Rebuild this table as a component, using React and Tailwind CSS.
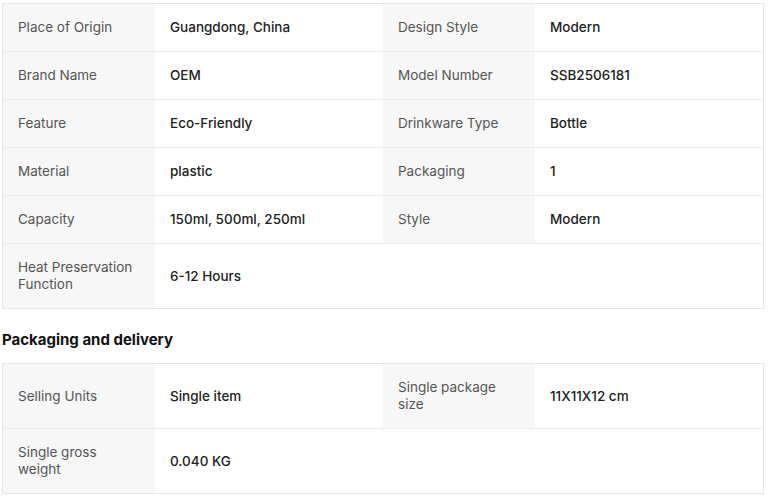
import React from 'react';

const attributes = [
  ['Place of Origin', 'Guangdong, China', 'Design Style', 'Modern'],
  ['Brand Name', 'OEM', 'Model Number', 'SSB2506181'],
  ['Feature', 'Eco-Friendly', 'Drinkware Type', 'Bottle'],
  ['Material', 'plastic', 'Packaging', '1'],
  ['Capacity', '150ml, 500ml, 250ml', 'Style', 'Modern'],
  ['Heat Preservation Function', '6-12 Hours'],
];

const packaging = [
  ['Selling Units', 'Single item', 'Single package size', '11X11X12 cm'],
  ['Single gross weight', '0.040 KG'],
];

function Row({ cells, last }) {
  const [l1, v1, l2, v2] = cells;
  return (
    <div className={`grid grid-cols-[152px_228px_152px_228px] ${last ? '' : 'border-b border-[#ebebeb]'}`}>
      <div className="bg-[#f7f7f7] pl-[15px] pr-[12px] py-[15px] flex items-center text-[#555] leading-[17px]">
        {l1}
      </div>
      <div className="px-[15px] py-[15px] flex items-center text-[#222] font-[450] leading-[17px]">
        {v1}
      </div>
      <div className={`${l2 ? 'bg-[#f7f7f7]' : ''} pl-[15px] pr-[12px] py-[15px] flex items-center text-[#555] leading-[17px]`}>
        {l2}
      </div>
      <div className="px-[15px] py-[15px] flex items-center text-[#222] font-[450] leading-[17px]">
        {v2}
      </div>
    </div>
  );
}

function Table({ rows }) {
  return (
    <div className="w-[762px] border border-[#e6e6e6] text-[13.5px]">
      {rows.map((r, i) => (
        <Row key={i} cells={r} last={i === rows.length - 1} />
      ))}
    </div>
  );
}

export default function App() {
  return (
    <div className="w-[768px] h-[496px] bg-white pl-[2px] pt-[3px] overflow-hidden" style={{ fontFamily: 'Inter, "Noto Sans", sans-serif' }}>
      <Table rows={attributes} />
      <h3 className="text-[15px] font-bold text-[#111] leading-[24px] pt-[19px] pb-[11px]">
        Packaging and delivery
      </h3>
      <Table rows={packaging} />
    </div>
  );
}
